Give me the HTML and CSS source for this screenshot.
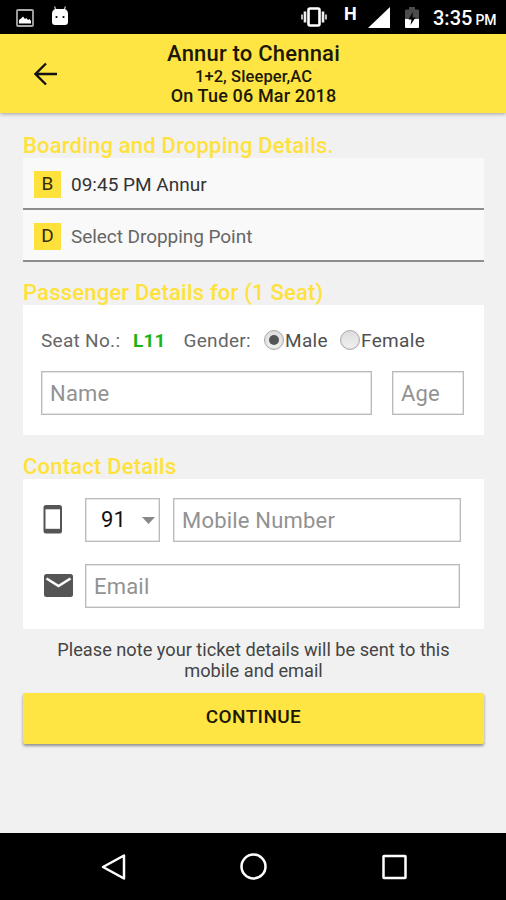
FILE: index.html
```html
<!DOCTYPE html>
<html lang="en">
<head>
<meta charset="utf-8">
<title>Passenger Details</title>
<link rel="stylesheet" href="styles.css">
</head>
<body>
<div class="statusbar">
  <svg class="status-picture" width="18" height="18" viewBox="0 0 18 18"><rect x="1" y="1" width="16" height="16" rx="1" fill="none" stroke="#aaa" stroke-width="1.8"/><path d="M3 14.500V11L5 9.500 7 7.500 9 10l1.500-1L12 11l1.500-1L15 12v2.500z" fill="#fff"/></svg>
  <svg class="status-robot" width="18" height="20" viewBox="0 0 18 20"><path d="M3.500.5 5 4M14.500.5 13 4" stroke="#bbb" stroke-width="1.300"/><path d="M1 7Q2 3 5 3h8q3 0 4 4v9q0 3-3 3H4q-3 0-3-3z" fill="#fff"/><circle cx="5.500" cy="11" r="1.100"/><circle cx="12.500" cy="11" r="1.100"/></svg>
  <svg class="status-vibrate" width="28" height="20" viewBox="0 0 28 20"><rect x="8.500" y="1.500" width="11" height="17" rx="1.500" fill="none" stroke="#fff" stroke-width="2.600"/><path d="M5 4.500v11M23 4.500v11" stroke="#eee" stroke-width="2.600"/><path d="M2 7.500v5M26 7.500v5" stroke="#bbb" stroke-width="2"/></svg>
  <span class="status-net">H</span>
  <svg class="status-signal" width="22" height="21" viewBox="0 0 22 21"><path d="M0 21 22 0v21z" fill="#fff"/></svg>
  <svg class="status-battery" width="14" height="21" viewBox="0 0 14 21"><path d="M0 3.500Q0 2.500 1 2.500h3V0h6v2.500h3q1 0 1 1V12H0z" fill="#4b4b4b"/><path d="M0 12h14v8q0 1-1 1H1q-1 0-1-1z" fill="#fff"/><path d="M8 5 3.500 12.500h3L5.500 18l5-7.500h-3z" fill="#000"/></svg>
  <span class="status-time">3:35<small>PM</small></span>
</div>
<header class="appbar">
  <svg class="back" width="24" height="24" viewBox="0 0 24 24"><path d="M23 12H2.500M12 1.500 1.500 12 12 22.500" fill="none" stroke="#111" stroke-width="2.300"/></svg>
  <div class="trip">
    <h1>Annur to Chennai</h1>
    <p class="bus">1+2, Sleeper,AC</p>
    <p class="date">On Tue 06 Mar 2018</p>
  </div>
</header>
<main>
  <h2 class="h-board">Boarding and Dropping Details.</h2>
  <div class="point"><span class="tag">B</span><span class="point-text">09:45 PM Annur</span></div>
  <div class="point drop"><span class="tag">D</span><span class="point-text">Select Dropping Point</span></div>
  <h2 class="h-pass">Passenger Details for (1 Seat)</h2>
  <section class="card passenger">
    <div class="seat">
      <span class="seat-label">Seat No.:</span><span class="seat-no">L11</span><span class="gender">Gender:</span><i class="radio checked"></i><span class="male">Male</span><i class="radio"></i><span class="female">Female</span>
    </div>
    <div class="fields"><div class="field name">Name</div><div class="field age">Age</div></div>
  </section>
  <h2 class="h-contact">Contact Details</h2>
  <section class="card contact">
    <div class="row">
      <svg class="icon" width="32" height="30" viewBox="0 0 32 30"><rect x="1.500" y="0" width="18.500" height="28.500" rx="2.500" fill="#555"/><rect x="3.500" y="4.300" width="14.500" height="19.500" fill="#fff"/></svg>
      <div class="field code"><span>91</span><svg width="13" height="7" viewBox="0 0 13 7"><path d="M0 0h13L6.500 7z" fill="#888"/></svg></div>
      <div class="field mobile">Mobile Number</div>
    </div>
    <div class="row">
      <svg class="icon" width="32" height="30" viewBox="0 0 32 30"><rect x="2" y="3" width="29" height="23" rx="2.500" fill="#555"/><path d="m4.500 7.500 12 7.500 12-7.500" fill="none" stroke="#fff" stroke-width="2.600"/></svg>
      <div class="field email">Email</div>
    </div>
  </section>
  <p class="note"><span>Please note your ticket details will be sent to this</span><br><span>mobile and email</span></p>
  <div class="continue"><span>CONTINUE</span></div>
</main>
<nav class="navbar">
  <svg width="26" height="28" viewBox="0 0 26 28"><path d="M23 2.500v23L2 14z" fill="none" stroke="#fff" stroke-width="2.500" stroke-linejoin="round"/></svg>
  <svg width="28" height="28" viewBox="0 0 28 28"><circle cx="13.500" cy="13.500" r="12" fill="none" stroke="#fff" stroke-width="2.500"/></svg>
  <svg width="26" height="28" viewBox="0 0 26 28"><rect x="2.500" y="3" width="22" height="22" rx=".5" fill="none" stroke="#fff" stroke-width="2.500"/></svg>
</nav>
</body>
</html>
```
FILE: styles.css
```css
* { box-sizing: border-box; }
body { margin: 0; width: 506px; height: 900px; overflow: hidden; display: flex; flex-direction: column; background: #f1f1f1; font-family: Roboto, "Liberation Sans", sans-serif; color: #333; }
h1, h2, p { margin: 0; font-weight: 500; }
span, h1, h2, p { white-space: nowrap; }
svg { display: block; flex: none; }

.statusbar { height: 34px; background: #000; color: #fff; display: flex; align-items: flex-start; flex: none; }
.status-picture { margin: 9px 0 0 16px; }
.status-robot { margin: 6px 0 0 17px; }
.status-vibrate { margin: 7px 0 0 231px; }
.status-net { margin: 3px 0 0 16px; width: 14px; font-size: 18px; line-height: 21px; font-weight: 700; }
.status-signal { margin: 7px 0 0 10px; }
.status-battery { margin: 7px 0 0 15px; }
.status-time { margin: 6px 0 0 14px; font-size: 20px; line-height: 24px; font-weight: 500; }
.status-time small { font-size: 14px; margin-left: 3px; }

.appbar { height: 79px; background: #ffe544; display: flex; align-items: flex-start; flex: none; box-shadow: 0 1px 4px rgba(0,0,0,.35); color: #1b1803; }
.back { margin: 28px 0 0 34px; }
.trip { width: 391px; text-align: center; }
.trip h1 { font-size: 22px; line-height: 24px; margin-top: 8px; letter-spacing: .2px; }
.bus { font-size: 16.5px; line-height: 18px; margin-top: 2px; letter-spacing: .1px; }
.date { font-size: 18px; line-height: 20px; letter-spacing: .15px; }

main { flex: 1; padding: 0 22px 0 23px; }
h2 { color: #ffe13c; font-size: 22px; line-height: 25px; letter-spacing: .2px; }
.h-board { margin-top: 20px; }
.point { height: 52px; background: #f9f9f9; border-bottom: 2px solid #8d8d8d; display: flex; padding: 13px 0 0 11px; font-size: 19px; line-height: 26px; }
.point.drop { height: 52px; color: #666; }
.tag { width: 27px; height: 27px; background: #ffe13c; color: #332d08; text-align: center; }
.point-text { margin-left: 10px; padding-top: 1px; }
.drop .point-text { letter-spacing: -.05px; }
.h-pass { margin-top: 18px; }
.card { background: #fff; }
.passenger { height: 130px; padding: 22px 20px 0 18px; }
.seat { display: flex; align-items: center; height: 27px; font-size: 19px; color: #666; letter-spacing: .15px; }
.seat-label { width: 92px; letter-spacing: .3px; }
.seat-no { width: 50.500px; color: #18b418; font-weight: 700; }
.gender { width: 80.500px; letter-spacing: .3px; }
.radio { flex: none; width: 20px; height: 20px; margin-top: -1px; border-radius: 50%; border: 1px solid #aaa; background: linear-gradient(#ddd, #f1f1f1); display: flex; align-items: center; justify-content: center; box-shadow: inset 0 0 0 1px #ddd; }
.radio.checked::after { content: ""; width: 10px; height: 10px; border-radius: 50%; background: #555; }
.male, .female { color: #505050; margin-left: 1px; letter-spacing: .35px; }
.male { width: 55px; }
.fields { display: flex; justify-content: space-between; margin-top: 17px; }
.field { height: 44px; border: 1px solid #bbb; box-shadow: inset 0 0 0 .5px #ccc; background: #fff; color: #929292; font-size: 22px; line-height: 44px; padding-left: 8px; letter-spacing: .2px; }
.name { width: 331px; }
.age { width: 72px; }
.h-contact { margin-top: 19px; }
.contact { height: 150px; padding: 19px 0 0 19px; }
.row { display: flex; align-items: center; height: 44px; }
.row + .row { margin-top: 22px; }
.icon { margin-right: 11px; }
.code { width: 75px; display: flex; align-items: center; color: #111; padding-left: 15px; }
.code svg { margin-left: 16px; }
.mobile { width: 288px; margin-left: 13px; }
.email { width: 375px; }
.note { margin-top: 10px; text-align: center; font-size: 18.200px; line-height: 21px; font-weight: 400; color: #444; }
.continue { margin-top: 12px; height: 51px; border-radius: 2px; background: #ffe544; box-shadow: 0 2px 3px rgba(0,0,0,.4); text-align: center; font-size: 19px; line-height: 48px; font-weight: 500; letter-spacing: .4px; color: #1b1803; }
.navbar { flex: none; height: 67px; background: #000; display: flex; justify-content: space-between; align-items: center; padding: 0 99px 0 101px; }
```
